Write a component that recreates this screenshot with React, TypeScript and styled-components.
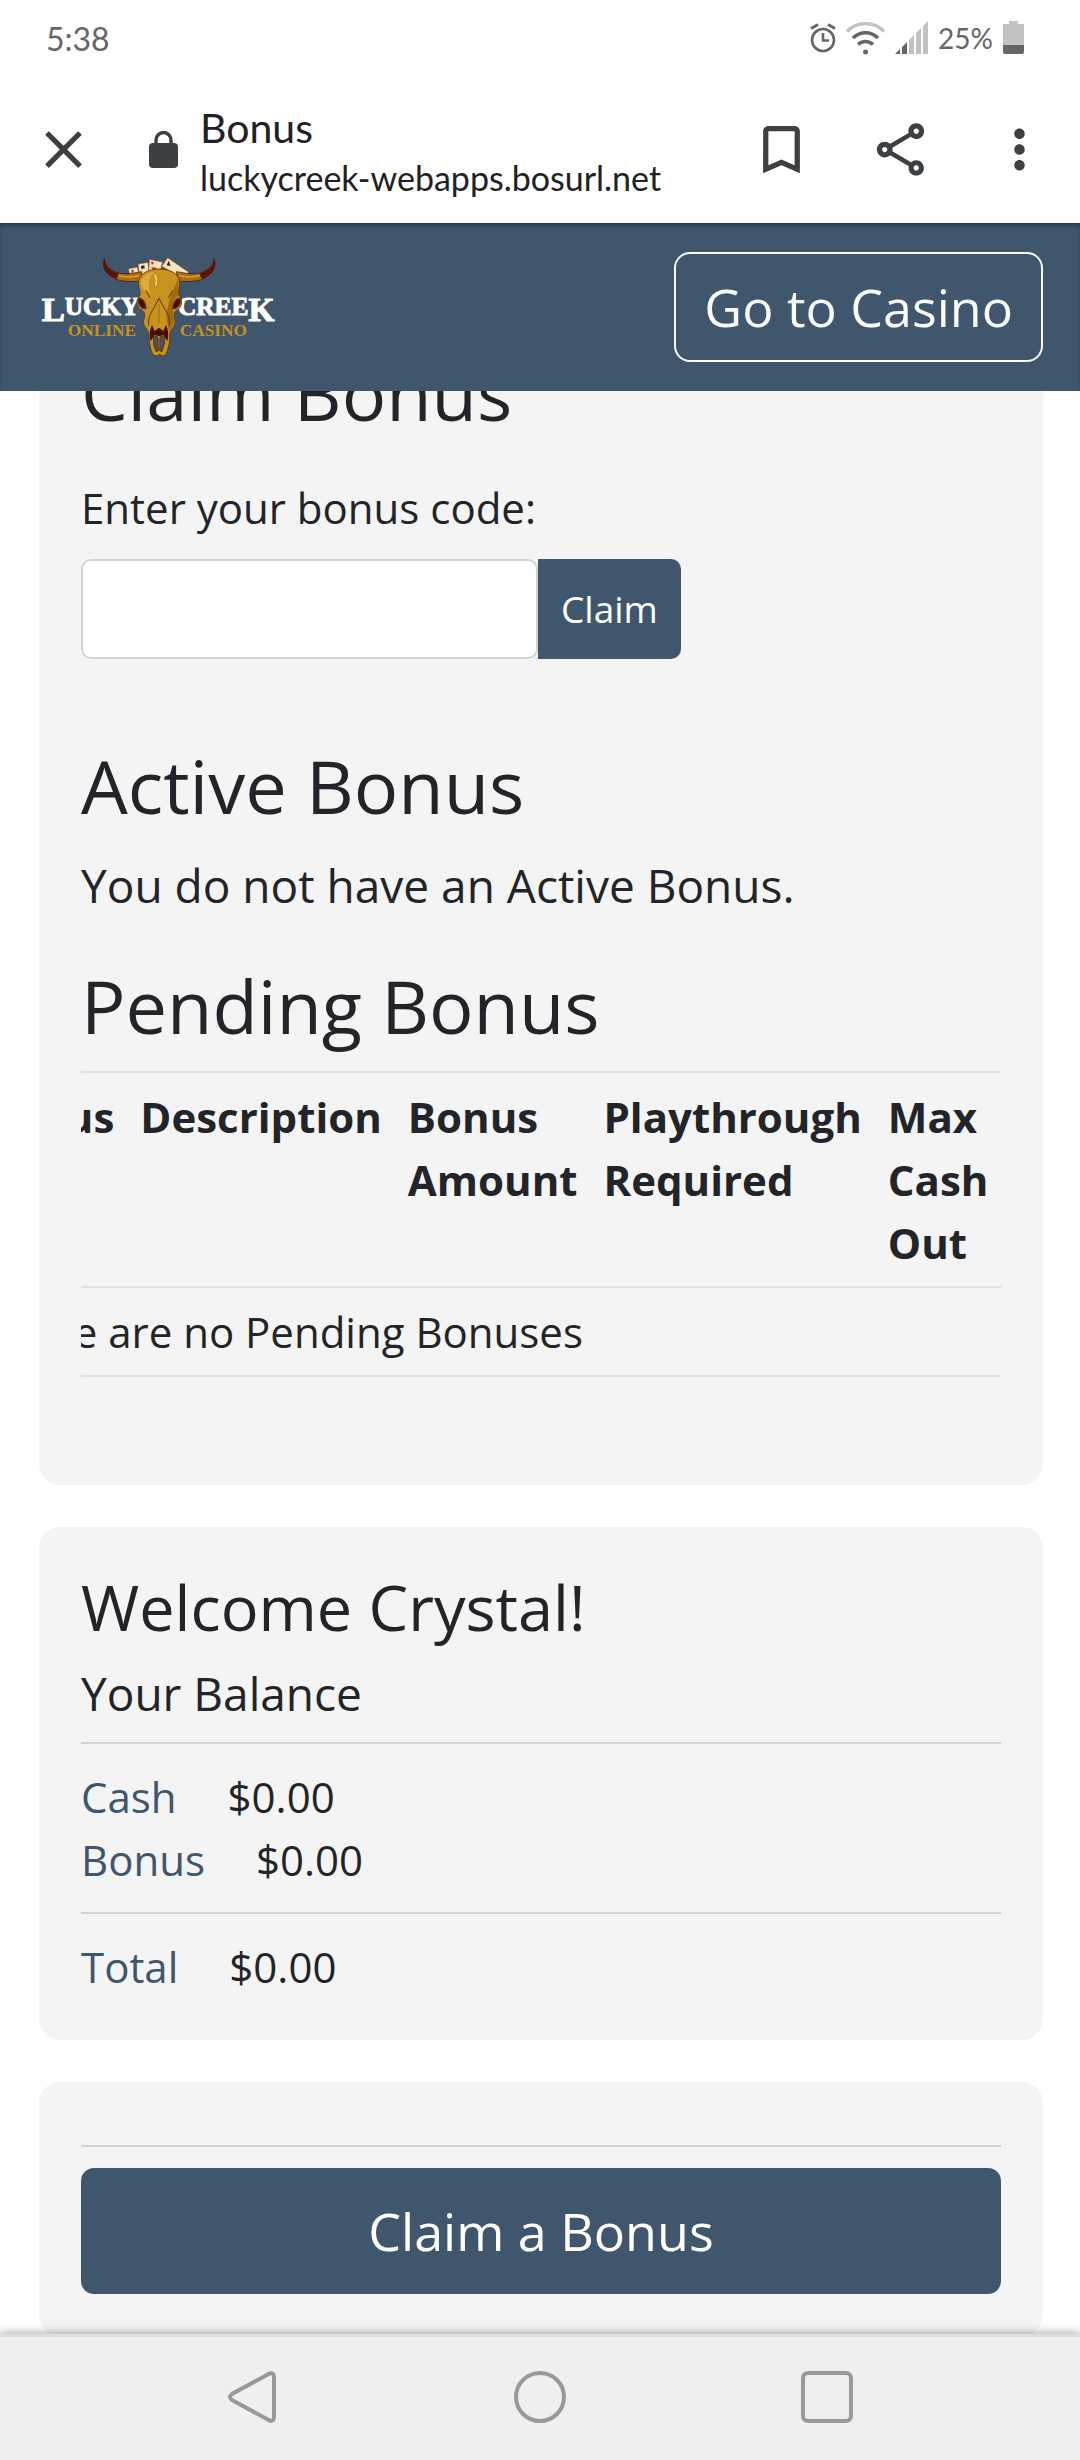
import { useLayoutEffect, useRef } from 'react';
import styled, { createGlobalStyle } from 'styled-components';
import {
  MdBookmarkBorder,
  MdClose,
  MdMoreVert,
  MdOutlineShare,
} from 'react-icons/md';

// CSS
const GlobalStyle = createGlobalStyle`
  * {
    box-sizing: border-box;
  }

  body {
    margin: 0;
    background-color: #fff;
    color: #212529;
    font-family: 'Open Sans', 'Noto Sans', sans-serif;
    font-size: 42px;
    line-height: 63px;
  }

  button,
  input {
    font-family: inherit;
  }
`;

const Screen = styled.div`
  height: 100vh;
  display: flex;
  flex-direction: column;
`;

const StatusBar = styled.div`
  height: 76px;
  flex-shrink: 0;
  display: flex;
  align-items: center;
  justify-content: space-between;
  padding: 0 56px 0 46px;
  color: #666;
  font-family: Lato, sans-serif;
  font-size: 32px;
`;

const StatusIcons = styled.div`
  display: flex;
  align-items: center;
  gap: 10px;
  font-size: 28px;
`;

const BrowserBar = styled.div`
  height: 147px;
  flex-shrink: 0;
  display: flex;
  align-items: center;
  padding: 0 29px 0 32px;
  color: #3c4043;
`;

const IconButton = styled.button`
  display: flex;
  padding: 0;
  border: none;
  background: none;
  color: inherit;
`;

const BrowserActions = styled.div`
  display: flex;
  gap: 56px;
`;

const LockBox = styled.div`
  display: flex;
  margin: 0 22px 0 54px;
`;

const PageInfo = styled.div`
  flex: 1;
  min-width: 0;
  padding-top: 4px;
  color: #202124;
  font-family: Lato, sans-serif;
`;

const PageTitle = styled.div`
  font-size: 41px;
  line-height: 52px;
`;

const PageUrl = styled.div`
  font-size: 34px;
  line-height: 48px;
`;

const Header = styled.header`
  height: 168px;
  flex-shrink: 0;
  display: flex;
  align-items: center;
  justify-content: space-between;
  padding: 0 37px 0 41px;
  background-color: #40566d;
  box-shadow: inset 0 4px 4px -2px rgba(0, 0, 0, 0.4);
`;

const CasinoButton = styled.button`
  height: 110px;
  padding: 0 28px 2px;
  border: solid 2px #f8f9fa;
  border-radius: 16px;
  background: none;
  color: #f8f9fa;
  font-size: 52px;
`;

const Content = styled.main`
  flex: 1;
  min-height: 0;
  display: flex;
  flex-direction: column;
  gap: 42px;
  padding: 42px 37px 42px 39px;
  overflow-y: auto;
  scrollbar-width: none;
`;

const Card = styled.section`
  flex-shrink: 0;
  padding: 42px;
  border-radius: 21px;
  background-color: #f4f4f4;
`;

const Title = styled.h2`
  margin: 0 0 21px;
  font-size: 74px;
  font-weight: 400;
  line-height: 88px;
`;

const WelcomeTitle = styled.h3`
  margin: 0 0 21px;
  font-size: 63px;
  font-weight: 400;
  line-height: 76px;
`;

const BalanceTitle = styled.h4`
  margin: 0;
  font-size: 46px;
  font-weight: 400;
  line-height: 55px;
`;

const Message = styled.p`
  margin: 0 0 42px;
  font-size: 46px;
  line-height: 69px;
`;

const CodeForm = styled.form`
  padding: 18px 0 83px;
`;

const CodeLabel = styled.label`
  display: block;
  margin-bottom: 20px;
`;

const CodeGroup = styled.div`
  display: flex;
  height: 100px;
`;

const CodeInput = styled.input`
  width: 457px;
  padding: 0 28px;
  border: solid 2px #ced4da;
  border-radius: 10px;
  background-color: #fff;
  font-size: 37px;
`;

const ClaimButton = styled.button`
  padding: 0 23px 2px;
  border: none;
  border-radius: 0 10px 10px 0;
  background-color: #40566d;
  color: #fff;
  font-size: 37px;
`;

const TableBox = styled.div`
  margin-bottom: 66px;
  overflow-x: auto;
  scrollbar-width: none;
`;

const Table = styled.table`
  width: 100%;
  border-spacing: 0;
  border-bottom: solid 2px #dee2e6;

  th,
  td {
    padding: 12px 13px;
    border-top: solid 2px #dee2e6;
    text-align: left;
    vertical-align: top;
  }
`;

const Line = styled.hr`
  height: 2px;
  margin: 21px 0;
  border: none;
  background-color: #d2d3d4;
`;

const BalanceRow = styled.div`
  display: flex;
  gap: 51px;
`;

const BalanceName = styled.span`
  color: #40566d;
`;

const BigButton = styled.button`
  width: 100%;
  height: 126px;
  padding: 0 0 2px;
  border: none;
  border-radius: 13px;
  background-color: #40566d;
  color: #fff;
  font-size: 52px;
`;

const NavBar = styled.nav`
  position: relative;
  height: 126px;
  flex-shrink: 0;
  display: flex;
  align-items: center;
  justify-content: center;
  gap: 235px;
  padding-bottom: 3px;
  border-top: solid 3px #ddd;
  background-color: #efefef;
  box-shadow: 0 -2px 8px rgba(0, 0, 0, 0.3);
`;

const AlarmIcon = () => (
  <svg width="26" height="30" viewBox="0 0 26 30" fill="none" stroke="#666">
    <circle cx="13" cy="17" r="11" strokeWidth="2.6" />
    <path d="M13 10v7.500h6" strokeWidth="2.600" />
    <path d="M1 5.500l7-4M25 5.500l-7-4" strokeWidth="3" />
  </svg>
);

const WifiIcon = () => (
  <svg width="39" height="34" viewBox="0 0 39 34" fill="none" strokeWidth="3.4">
    <path d="M1 10.500C11 0 28 0 38 10.500" stroke="#c2c2c2" />
    <path d="M7 17c7-7 18-7 25 0M12 23.500c4-4 11-4 15 0" stroke="#666" />
    <circle cx="19.500" cy="31" r="2.500" fill="#666" />
  </svg>
);

const SignalIcon = () => (
  <svg width="33" height="34" viewBox="0 0 33 34">
    <path d="M0 33l5-5v5zM7 33V26l5-5v12z" fill="#666" />
    <path d="M14 33V19l5-5v19zM21 33V12l5-5v26zM28 33V5l5-5v33z" fill="#c2c2c2" />
  </svg>
);

const BatteryIcon = () => (
  <svg width="21" height="34" viewBox="0 0 21 34">
    <path d="M0 3h6V0h9v3h6v22H0z" fill="#c2c2c2" />
    <path d="M0 24h21v7q0 2-2 2H2q-2 0-2-2z" fill="#666" />
  </svg>
);

const LockIcon = () => (
  <svg width="29" height="37" viewBox="0 0 29 37">
    <rect y="12" width="29" height="25" rx="4" fill="#3c4043" />
    <path d="M7 14V9a7.500 7.500 0 0 1 15 0v5" fill="none" stroke="#3c4043" strokeWidth="3.400" />
  </svg>
);

const Logo = () => (
  <svg width="235" height="100" viewBox="63 112 705 300" role="img" aria-label="Lucky Creek Online Casino">
    <g
      fill="#fff"
      stroke="#fff"
      strokeWidth="3"
      fontFamily="'Liberation Serif', serif"
      fontWeight="700"
      fontSize="76"
    >
      <text x="65" y="287">
        <tspan fontSize="104" dy="16">L</tspan>
        <tspan dy="-16">UCKY</tspan>
      </text>
      <text x="474" y="287">
        CREE<tspan fontSize="100" dy="16">K</tspan>
      </text>
    </g>
    <g fill="#c8921f" fontFamily="'Liberation Serif', serif" fontWeight="700" fontSize="52">
      <text x="143" y="350">ONLINE</text>
      <text x="479" y="350">CASINO</text>
    </g>

    {/* cards */}
    <g stroke="#7a4a28" strokeWidth="2" fill="#f6e3bd">
      <path d="M325 147l27-5 6 24-28 4z" />
      <path d="M354 133l30-5 4 34-30 4z" />
      <path d="M388 119l40 8-8 34-34-4z" />
      <path d="M443 114l64 44-24 16-58-34z" />
    </g>
    <path d="M334 152l8-1-6 12M394 126l8 3-6 6zM394 143l16 2-8 8z" fill="#c0281c" stroke="#c0281c" />
    <path d="M446 123l-6 14 12 2zM363 139l10-2 1 9-10 2z" fill="#2b2320" />

    {/* horns */}
    <path
      d="M253 116C256 142 276 158 306 162C330 165 344 158 366 156L362 184C330 188 296 186 276 172C250 154 246 138 253 116z"
      fill="#a96c12"
      stroke="#3d1206"
      strokeWidth="2"
    />
    <path
      d="M582 116C579 142 559 158 529 162C505 165 491 158 469 156L473 184C505 188 539 186 559 172C585 154 589 138 582 116z"
      fill="#a96c12"
      stroke="#3d1206"
      strokeWidth="2"
    />
    <path d="M253 116c3 26 18 38 44 46l-8 16c-32-12-46-34-36-62zM582 116c-3 26-18 38-44 46l8 16c32-12 46-34 36-62z" fill="#5a1208" />
    <path d="M296 168q32 8 62 0M539 168q-32 8-62 0" fill="none" stroke="#d89a2a" strokeWidth="5" />

    {/* skull */}
    <path
      d="M417 148C448 148 474 160 479 184C480 206 472 214 477 228C488 236 488 260 474 270C462 274 458 286 466 304C466 322 452 328 450 340C450 366 446 388 436 406Q427 412 419 404Q409 412 399 406C390 388 387 366 386 340C384 328 370 322 370 304C378 286 374 274 362 270C348 260 348 236 359 228C364 214 354 206 356 184C361 160 387 148 417 148z"
      fill="#c8921f"
      stroke="#5d3208"
      strokeWidth="2.500"
    />
    <path d="M474 176c6 22-6 32 2 52-14 6-20 20-18 38l6 36c-4 18-14 22-14 36-10-28-14-52-6-76 4-28 20-56 30-86z" fill="#a06a12" />
    <path d="M362 188c8-20 22-29 40-32-16 18-20 40-10 76-14-12-26-24-30-44z" fill="#dfab3b" />
    <path d="M403 164q10 14 4 34" fill="none" stroke="#f4d98c" strokeWidth="4" />
    <path d="M356 236c12-2 22 14 22 30-14 4-28-14-22-30zM480 236c-12-2-22 14-22 30 14 4 28-14 22-30z" fill="#3c0b04" stroke="#6a3b0a" strokeWidth="4" />
    <path d="M378 212l12 22M458 212l-12 22" stroke="#7b4a0c" strokeWidth="4" />
    <path d="M400 268l17-32 17 32M400 268c-10 14-16 30-14 50M434 268c10 14 16 30 14 50" fill="none" stroke="#5d3208" strokeWidth="3" />
    <path d="M417 252v60" stroke="#8f5e12" strokeWidth="2" />
    <path d="M396 316l8 18 13-10 13 10 8-18c8 16 8 36 4 48l-12-18-13 4-13-4-12 18c-4-12-4-32 4-48z" fill="#4a0d05" />
    <path d="M400 352l12-4 2 46-6 2q-10-20-8-44zM434 352l-12-4-2 46 6 2q10-20 8-44z" fill="#40566d" stroke="#5d2008" strokeWidth="2" />
    <path d="M417 354v40" stroke="#5d2008" strokeWidth="3" />
  </svg>
);

const App = () => {
  const contentRef = useRef<HTMLElement>(null);
  const tableRef = useRef<HTMLDivElement>(null);

  useLayoutEffect(() => {
    if (contentRef.current) contentRef.current.scrollTop = 126;
    if (tableRef.current) tableRef.current.scrollLeft = tableRef.current.scrollWidth;
  }, []);

  return (
    <Screen>
      <GlobalStyle />
      <StatusBar>
        <span>5:38</span>
        <StatusIcons>
          <AlarmIcon />
          <WifiIcon />
          <SignalIcon />
          <span>25%</span>
          <BatteryIcon />
        </StatusIcons>
      </StatusBar>
      <BrowserBar>
        <IconButton aria-label="Close">
          <MdClose size={63} />
        </IconButton>
        <LockBox>
          <LockIcon />
        </LockBox>
        <PageInfo>
          <PageTitle>Bonus</PageTitle>
          <PageUrl>luckycreek-webapps.bosurl.net</PageUrl>
        </PageInfo>
        <BrowserActions>
          <IconButton aria-label="Bookmark">
            <MdBookmarkBorder size={63} />
          </IconButton>
          <IconButton aria-label="Share">
            <MdOutlineShare size={63} />
          </IconButton>
          <IconButton aria-label="More">
            <MdMoreVert size={63} />
          </IconButton>
        </BrowserActions>
      </BrowserBar>
      <Header>
        <Logo />
        <CasinoButton>Go to Casino</CasinoButton>
      </Header>
      <Content ref={contentRef}>
        <Card>
          <Title>Claim Bonus</Title>
          <CodeForm onSubmit={(e) => e.preventDefault()}>
            <CodeLabel htmlFor="code">Enter your bonus code:</CodeLabel>
            <CodeGroup>
              <CodeInput id="code" type="text" />
              <ClaimButton type="submit">Claim</ClaimButton>
            </CodeGroup>
          </CodeForm>
          <Title>Active Bonus</Title>
          <Message>You do not have an Active Bonus.</Message>
          <Title>Pending Bonus</Title>
          <TableBox ref={tableRef}>
            <Table>
              <thead>
                <tr>
                  <th>Bonus</th>
                  <th>Description</th>
                  <th>Bonus Amount</th>
                  <th>Playthrough Required</th>
                  <th>Max Cash Out</th>
                </tr>
              </thead>
              <tbody>
                <tr>
                  <td colSpan={5}>There are no Pending Bonuses</td>
                </tr>
              </tbody>
            </Table>
          </TableBox>
        </Card>
        <Card>
          <WelcomeTitle>Welcome Crystal!</WelcomeTitle>
          <BalanceTitle>Your Balance</BalanceTitle>
          <Line />
          <BalanceRow>
            <BalanceName>Cash</BalanceName>
            <span>$0.00</span>
          </BalanceRow>
          <BalanceRow>
            <BalanceName>Bonus</BalanceName>
            <span>$0.00</span>
          </BalanceRow>
          <Line />
          <BalanceRow>
            <BalanceName>Total</BalanceName>
            <span>$0.00</span>
          </BalanceRow>
        </Card>
        <Card>
          <Line />
          <BigButton>Claim a Bonus</BigButton>
        </Card>
      </Content>
      <NavBar>
        <IconButton aria-label="Back">
          <svg width="52" height="54" viewBox="0 0 52 54" fill="none" stroke="#999" strokeWidth="4">
            <path d="M42.500 3.500L5 24q-4 3 0 6l37.500 20.500q4.500 1.500 4.500-4V7.500q0-5.500-4.500-4z" />
          </svg>
        </IconButton>
        <IconButton aria-label="Home">
          <svg width="52" height="54" viewBox="0 0 52 54" fill="none" stroke="#999" strokeWidth="4">
            <circle cx="26" cy="27" r="24" />
          </svg>
        </IconButton>
        <IconButton aria-label="Recent apps">
          <svg width="52" height="54" viewBox="0 0 52 54" fill="none" stroke="#999" strokeWidth="4">
            <rect x="2" y="3" width="48" height="48" rx="5" />
          </svg>
        </IconButton>
      </NavBar>
    </Screen>
  );
};

export default App;
